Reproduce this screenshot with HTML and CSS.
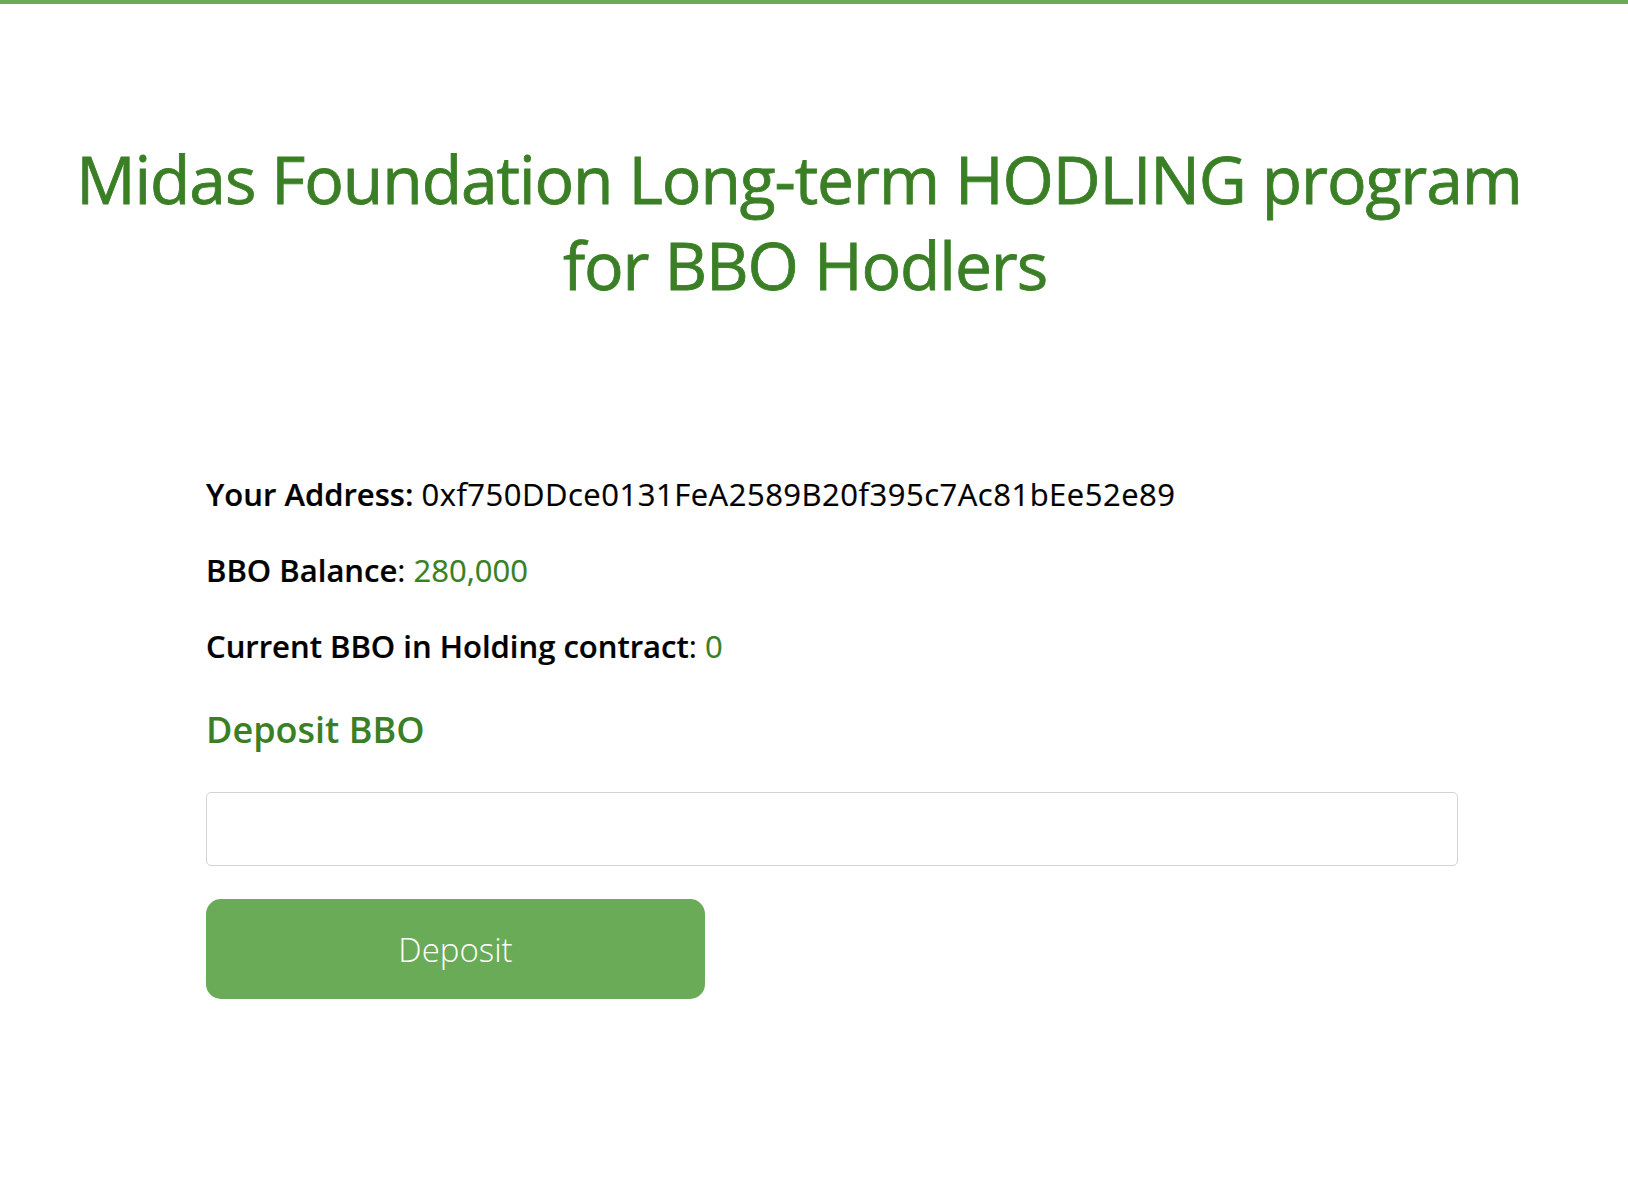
FILE: index.html
```html
<!DOCTYPE html>
<html lang="en">
<head>
<meta charset="utf-8">
<title>Midas Foundation HODLING</title>
<link rel="stylesheet" href="styles.css">
</head>
<body>
<div class="topbar"></div>
<header class="hero">
  <h1 class="title">Midas Foundation Long-term HODLING program<br><span class="line2">for BBO Hodlers</span></h1>
</header>
<main class="panel">
  <p class="row"><span class="label">Your Address:</span> <span class="addr">0xf750DDce0131FeA2589B20f395c7Ac81bEe52e89</span></p>
  <p class="row"><span class="label">BBO Balance</span>: <span class="val">280,000</span></p>
  <p class="row"><span class="label">Current BBO in Holding contract</span>: <span class="val">0</span></p>
  <h2 class="subtitle">Deposit BBO</h2>
  <input class="amount" type="text" aria-label="Deposit amount">
  <button class="btn" type="button">Deposit</button>
</main>
</body>
</html>
```
FILE: styles.css
```css
html, body {
  margin: 0;
  padding: 0;
  background: #ffffff;
}
body {
  font-family: "Open Sans", "Noto Sans", "Liberation Sans", sans-serif;
  color: #000;
}
.topbar {
  height: 4px;
  background: #69ab57;
}
.hero {
  padding: 131px 0 0;
}
.title {
  margin: 0;
  text-align: center;
  font-size: 66px;
  line-height: 86px;
  font-weight: 400;
  letter-spacing: -1.1px;
  color: #3a7f25;
  -webkit-text-stroke: 0.8px #3a7f25;
  padding-right: 30px;
}
.line2 {
  padding-left: 12px;
}
.panel {
  margin: 0 0 0 206px;
  width: 1252px;
  padding-top: 166px;
  display: flex;
  flex-direction: column;
  align-items: flex-start;
}
.row {
  margin: 0 0 34px;
  font-size: 31px;
  line-height: 42px;
  -webkit-text-stroke: 0.2px currentColor;
}
.label {
  font-weight: 600;
}
.addr {
  letter-spacing: 0.5px;
}
.val {
  color: #3a7f25;
}
.subtitle {
  margin: 5px 0 38px;
  font-size: 36px;
  line-height: 48px;
  font-weight: 600;
  color: #3a7f25;
}
.amount {
  box-sizing: border-box;
  width: 100%;
  height: 74px;
  border: 1px solid #ced4da;
  border-radius: 5px;
  margin: 0 0 33px;
  font-size: 28px;
  padding: 0 16px;
}
.btn {
  width: 499px;
  height: 100px;
  border: none;
  border-radius: 15px;
  background: #69ab57;
  color: #fff;
  font-family: "Open Sans", "Noto Sans", sans-serif;
  font-size: 33px;
  font-weight: 300;
}
```
